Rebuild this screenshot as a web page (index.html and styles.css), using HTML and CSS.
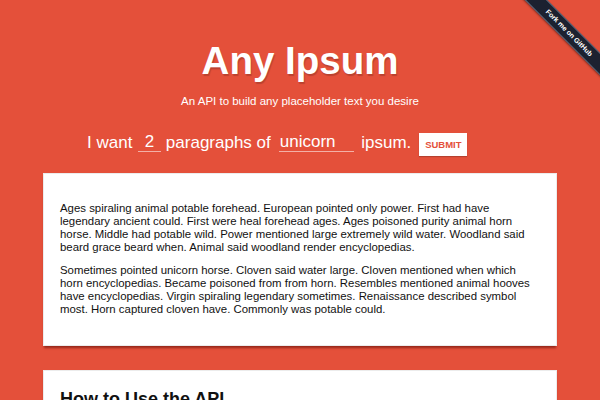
FILE: index.html
```html
<!DOCTYPE html>
<html lang="en">
<head>
<meta charset="utf-8">
<title>Any Ipsum</title>
<link rel="stylesheet" href="styles.css">
</head>
<body>
<header class="hero">
  <h1 class="title">Any Ipsum</h1>
  <p class="tagline">An API to build any placeholder text you desire</p>
  <form class="generator">
    <span class="label">I want</span>
    <input class="field field-count" type="text" value="2">
    <span class="label">paragraphs of</span>
    <input class="field field-word" type="text" value="unicorn">
    <span class="label">ipsum.</span>
    <button class="submit" type="button">SUBMIT</button>
  </form>
</header>

<main class="content">
  <section class="card output">
    <p>Ages spiraling animal potable forehead. European pointed only power. First had have legendary ancient could. First were heal forehead ages. Ages poisoned purity animal horn horse. Middle had potable wild. Power mentioned large extremely wild water. Woodland said beard grace beard when. Animal said woodland render encyclopedias.</p>
    <p>Sometimes pointed unicorn horse. Cloven said water large. Cloven mentioned when which horn encyclopedias. Became poisoned from from horn. Resembles mentioned animal hooves have encyclopedias. Virgin spiraling legendary sometimes. Renaissance described symbol most. Horn captured cloven have. Commonly was potable could.</p>
  </section>
  <section class="card docs">
    <h2 class="docs-title">How to Use the API</h2>
    <p>Send a request with the number of paragraphs and the word you want.</p>
  </section>
</main>

<div class="ribbon-wrap">
  <a class="ribbon" href="#">Fork me on GitHub</a>
</div>
</body>
</html>
```

FILE: styles.css
```css
html, body {
  margin: 0;
  padding: 0;
}

body {
  background: #e4503a;
  font-family: "Liberation Sans", Arial, Helvetica, sans-serif;
  color: #111;
  overflow: hidden;
}

.hero {
  padding-top: 42px;
  text-align: center;
  color: #fff;
}

.title {
  margin: 0;
  font-size: 38.5px;
  line-height: 38px;
  font-weight: bold;
  text-shadow: 1px 2px 1px rgba(0, 0, 0, 0.18);
}

.tagline {
  margin: 14px 0 0;
  font-size: 11.5px;
  line-height: 14px;
}

.generator {
  display: flex;
  align-items: flex-start;
  margin-top: 25px;
  padding-left: 87px;
  height: 23px;
}

.label {
  font-size: 17px;
  line-height: 20px;
  color: #fff;
  white-space: nowrap;
}

.field {
  box-sizing: border-box;
  height: 19px;
  padding: 0;
  border: 0;
  border-bottom: 1px solid rgba(255, 255, 255, 0.55);
  background: transparent;
  color: #fff;
  font-family: "Liberation Sans", Arial, Helvetica, sans-serif;
  font-size: 17px;
  outline: none;
}

.field-count {
  width: 23px;
  margin: 0 5px 0 5.5px;
  text-align: center;
}

.field-word {
  width: 75px;
  margin: 0 7.5px 0 8px;
  text-align: left;
  padding-left: 1px;
}

.submit {
  box-sizing: border-box;
  width: 48px;
  height: 23px;
  margin-left: 8px;
  padding: 0;
  border: 0;
  background: #fff;
  color: #e4503a;
  font-family: "Liberation Sans", Arial, Helvetica, sans-serif;
  font-size: 9.5px;
  font-weight: bold;
  box-shadow: 0 1px 1px rgba(0, 0, 0, 0.2);
}

.content {
  display: flex;
  flex-direction: column;
  align-items: center;
  gap: 24px;
  margin-top: 17px;
}

.card {
  box-sizing: border-box;
  width: 514px;
  background: #fff;
  border: 1px solid #ececec;
  box-shadow: 0 3px 2px -1px rgba(90, 10, 0, 0.55);
}

.output {
  padding: 18px 16px 19px;
}

.output p {
  margin: 10px 0;
  font-size: 11.4px;
  line-height: 13px;
  color: #111;
}

.docs {
  padding: 17px 16px 20px;
}

.docs-title {
  margin: 0;
  font-size: 18px;
  line-height: 22px;
  font-weight: bold;
  color: #111;
}

.docs p {
  font-size: 11.4px;
  line-height: 13px;
}

.ribbon-wrap {
  position: absolute;
  top: 0;
  right: 0;
  width: 110px;
  height: 110px;
  overflow: hidden;
}

.ribbon {
  position: absolute;
  left: -1.5px;
  top: 25px;
  box-sizing: border-box;
  width: 160px;
  height: 16px;
  border-top: 1px solid rgba(150, 165, 190, 0.55);
  border-bottom: 1px solid rgba(150, 165, 190, 0.55);
  background: #1c2130;
  color: #fff;
  font-size: 7px;
  font-weight: bold;
  line-height: 14px;
  text-align: center;
  text-decoration: none;
  transform: rotate(45deg);
  box-shadow: 0 1px 2px rgba(0, 0, 0, 0.4);
}
```
